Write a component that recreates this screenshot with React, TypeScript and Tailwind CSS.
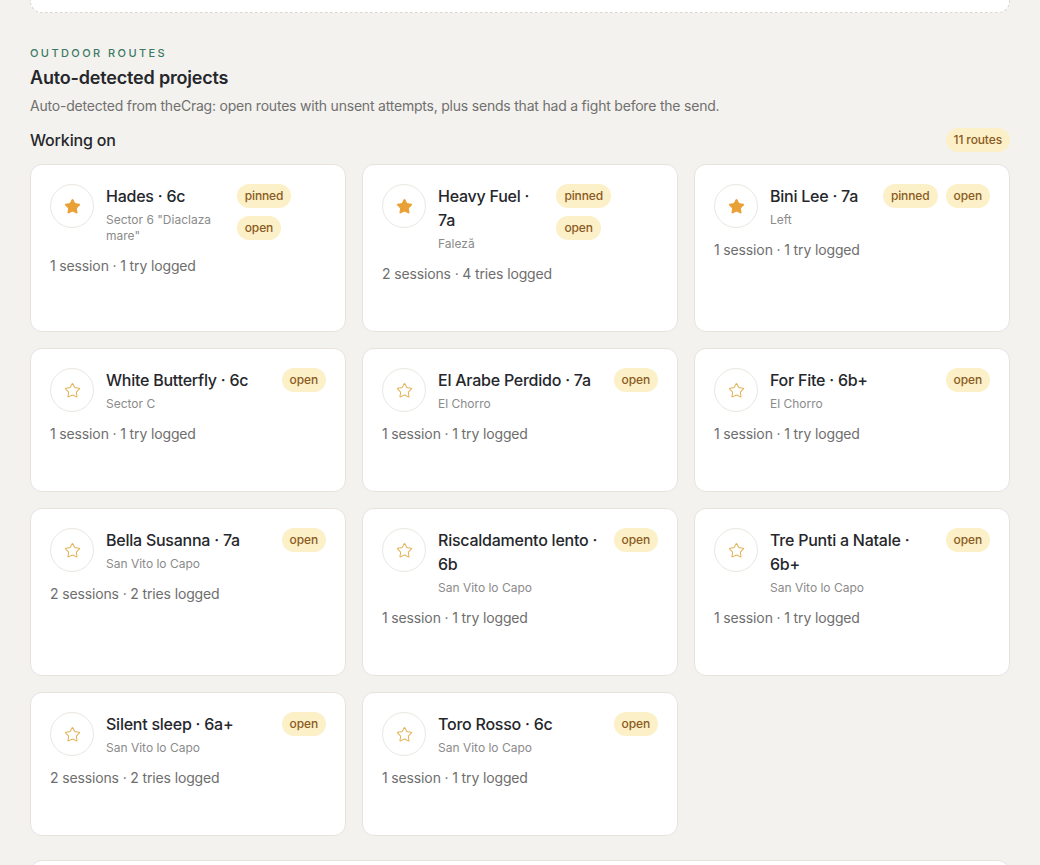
import { Star } from "lucide-react";

type Route = {
  name: string;
  grade: string;
  sector: string;
  sessions: number;
  tries: number;
  pinned?: boolean;
};

const routes: Route[] = [
  { name: "Hades", grade: "6c", sector: 'Sector 6 "Diaclaza mare"', sessions: 1, tries: 1, pinned: true },
  { name: "Heavy Fuel", grade: "7a", sector: "Faleză", sessions: 2, tries: 4, pinned: true },
  { name: "Bini Lee", grade: "7a", sector: "Left", sessions: 1, tries: 1, pinned: true },
  { name: "White Butterfly", grade: "6c", sector: "Sector C", sessions: 1, tries: 1 },
  { name: "El Arabe Perdido", grade: "7a", sector: "El Chorro", sessions: 1, tries: 1 },
  { name: "For Fite", grade: "6b+", sector: "El Chorro", sessions: 1, tries: 1 },
  { name: "Bella Susanna", grade: "7a", sector: "San Vito lo Capo", sessions: 2, tries: 2 },
  { name: "Riscaldamento lento", grade: "6b", sector: "San Vito lo Capo", sessions: 1, tries: 1 },
  { name: "Tre Punti a Natale", grade: "6b+", sector: "San Vito lo Capo", sessions: 1, tries: 1 },
  { name: "Silent sleep", grade: "6a+", sector: "San Vito lo Capo", sessions: 2, tries: 2 },
  { name: "Toro Rosso", grade: "6c", sector: "San Vito lo Capo", sessions: 1, tries: 1 },
];

function Badge({ children }: { children: React.ReactNode }) {
  return (
    <span className="inline-flex h-6 items-center rounded-full bg-[#fcf0c8] px-2 text-xs font-medium tracking-[-0.01em] text-[#8a5a22]">
      {children}
    </span>
  );
}

function RouteCard({ route }: { route: Route }) {
  const plural = (n: number, one: string, many: string) => `${n} ${n === 1 ? one : many}`;
  return (
    <div className="rounded-xl border border-[#e7e3db] bg-white px-[19px] pt-[19px] pb-[47px]">
      <div className="flex items-start gap-3">
        <div className="flex size-11 shrink-0 items-center justify-center rounded-full border border-[#ebe7e0] bg-white">
          {route.pinned ? (
            <Star size={17} className="fill-[#e9a036] text-[#e9a036]" strokeWidth={1.5} />
          ) : (
            <Star size={17} className="text-[#e2b458]" strokeWidth={1.5} />
          )}
        </div>
        <div className="min-w-0 grow">
          <div className="text-base leading-6 font-medium tracking-[-0.015em] text-[#25272c]">
            {route.name} · {route.grade}
          </div>
          <div className="mt-1 text-xs leading-4 text-[#8b8b8b]">{route.sector}</div>
        </div>
        <div className="flex flex-wrap gap-2">
          {route.pinned && <Badge>pinned</Badge>}
          <Badge>open</Badge>
        </div>
      </div>
      <div className="mt-3 text-sm leading-5 tracking-[-0.01em] text-[#6e6e6e]">
        {plural(route.sessions, "session", "sessions")} · {plural(route.tries, "try", "tries")} logged
      </div>
    </div>
  );
}

export default function App() {
  return (
    <div
      className="min-h-[865px] bg-[#f4f2ee] px-[30px] text-[#25272c]"
      style={{ fontFamily: "Inter, 'Noto Sans', sans-serif" }}
    >
      <div className="h-[13px] rounded-b-xl border border-t-0 border-dashed border-[#dcd8d0] bg-white" />

      <section className="mt-8">
        <div className="text-[11px] leading-4 font-medium tracking-[0.22em] text-[#3b7a66] uppercase">
          Outdoor routes
        </div>
        <h2 className="mt-[5px] text-lg leading-6 font-semibold tracking-[-0.01em]">Auto-detected projects</h2>
        <p className="mt-1.5 text-sm leading-5 tracking-[-0.015em] text-[#707070]">
          Auto-detected from theCrag: open routes with unsent attempts, plus sends that had a fight before the send.
        </p>

        <div className="mt-3 flex items-center justify-between">
          <h3 className="text-base leading-6 font-medium tracking-[-0.01em]">Working on</h3>
          <Badge>11 routes</Badge>
        </div>

        <div className="mt-3 grid grid-cols-3 gap-4">
          {routes.map((r) => (
            <RouteCard key={r.name} route={r} />
          ))}
        </div>
      </section>

      <div className="mt-6 h-24 rounded-xl border border-[#e7e3db] bg-white" />
    </div>
  );
}
